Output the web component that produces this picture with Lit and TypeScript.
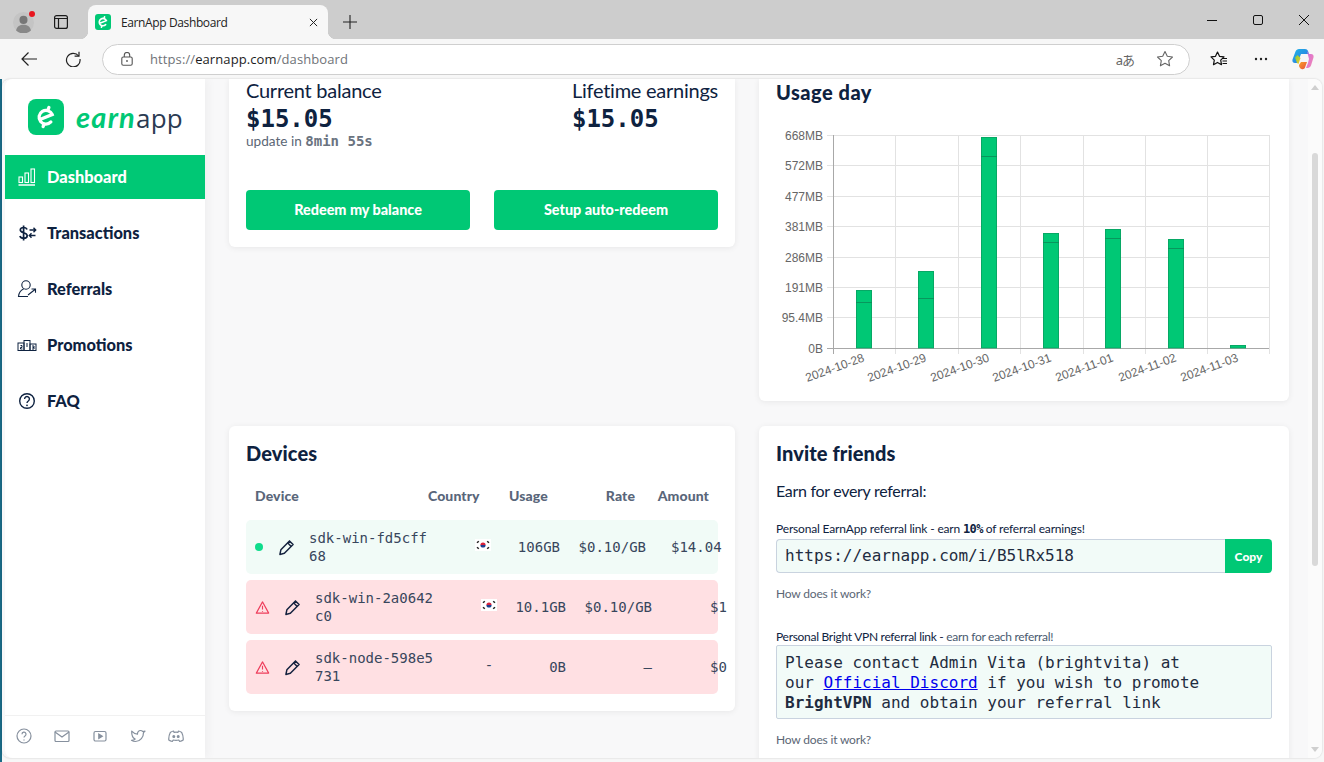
import { LitElement, html, css, svg } from "lit";
import { customElement } from "lit/decorators.js";

const pencil = html`<svg class="pencil" viewBox="0 0 16 16" width="17" height="17" fill="none" stroke="#16233f" stroke-width="1.4" stroke-linejoin="round"><path d="M10.8 1.800l3.400 3.400-8.200 8.300-4.200 1 .9-4.300z"/><path d="M9 3.600l3.400 3.400"/></svg>`;
const warn = html`<svg viewBox="0 0 16 16" width="15" height="15" fill="none" stroke="#ee3e5c" stroke-width="1.2" stroke-linejoin="round"><path d="M8 2L14.6 14H1.4z"/><path d="M8 6.200v4M8 11.600v1"/></svg>`;
const flag = html`<svg viewBox="0 0 16 12" width="16" height="12"><rect width="16" height="12" fill="#fff"/><path d="M5.400 6a2.600 2.600 0 0 1 5.200 0z" fill="#d8203a"/><path d="M5.400 6a2.600 2.600 0 0 0 5.200 0z" fill="#1d3f8f"/><g stroke="#222" stroke-width="1.500"><path d="M2 3.800l1.800-1.600M12.200 2.200L14 3.800M2 8.200l1.800 1.600M12.200 9.800L14 8.200"/></g></svg>`;
const eMark = (size: number, sw: number) => html`<svg viewBox="0 0 24 24" width=${size} height=${size} fill="none" stroke="#fff" stroke-width=${sw} stroke-linecap="round"><path d="M6.400 14.300L17.700 9.700A6.300 6.300 0 1 0 16.500 16.500"/><path d="M14.700 3.200L13.900 5.200M9.300 20.800L10.100 18.800"/></svg>`;

const yTicks: [string, number][] = [["668MB",135],["572MB",165],["477MB",196],["381MB",226],["286MB",257],["191MB",287],["95.4MB",317],["0B",348]];
const xGrid = [833,895,958,1020,1083,1145,1207,1269];
const bars: [string, number, number, number | null][] = [
  ["2024-10-28",864,290,302],["2024-10-29",926,271,298],["2024-10-30",989,137,156],
  ["2024-10-31",1051,233,242],["2024-11-01",1113,229,238],["2024-11-02",1176,239,248],["2024-11-03",1238,345,null]];

function chart() {
  const ox = 776, oy = 120;
  return html`<svg class="chart" width="510" height="270" viewBox="${ox} ${oy} 510 270">
    ${yTicks.map(([l,y]) => svg`<line x1="827" x2="1269" y1=${y+.5} y2=${y+.5} stroke="#e2e2e2"/>
      <text x="823" y=${y+4.5} text-anchor="end" class="tick">${l}</text>`)}
    ${xGrid.map((x) => svg`<line x1=${x+.5} x2=${x+.5} y1="135" y2="354" stroke="#e2e2e2"/>`)}
    <line x1="833.5" x2="833.5" y1="135" y2="354" stroke="#a8a8a8"/>
    <line x1="827" x2="1269" y1="348.5" y2="348.5" stroke="#a8a8a8"/>
    ${bars.map(([d,x,t,m]) => svg`<rect x=${x-8} y=${t} width="16" height=${348-t} fill="#00c875"/>
      <rect x=${x-7.5} y=${t+.5} width="15" height=${347.5-t} fill="none" stroke="#0a9d60" stroke-opacity=".75"/>
      ${m ? svg`<line x1=${x-8} x2=${x+8} y1=${m+.5} y2=${m+.5} stroke="#0a8a58" stroke-opacity=".8"/>` : null}
      <text class="tick" text-anchor="end" transform="translate(${x+1} 361) rotate(-20)">${d}</text>`)}
  </svg>`;
}

@customElement("app-root")
export class AppRoot extends LitElement {
  static styles = css`
    :host { display:block; width:1324px; height:762px; overflow:hidden; position:relative;
      font-family:Lato,"Open Sans",sans-serif; color:#0e2240; background:#f7f7f7; }
    * { box-sizing:border-box; }
    .mono { font-family:"DejaVu Sans Mono","Liberation Mono",monospace; }

    .tabstrip { height:39px; background:#cdcdcd; display:flex; align-items:flex-end; }
    .avatar { width:21px; height:21px; margin:0 0 6px 13px; position:relative; }
    .avatar svg { display:block; }
    .dot { position:absolute; left:16px; top:-1px; width:6px; height:6px; border-radius:50%; background:#e8161f; }
    .tabs-ic { margin:0 0 10px 20px; }
    .tab { width:240px; height:34px; margin-left:20px; background:#f7f7f7; border-radius:8px 8px 0 0; position:relative;
      display:flex; align-items:center; padding:0 10px 0 7px; font-size:12px; letter-spacing:-.38px; font-family:"Open Sans",sans-serif; color:#222; }
    .tab::before, .tab::after { content:""; position:absolute; bottom:0; width:8px; height:8px; }
    .tab::before { left:-8px; background:radial-gradient(circle at 0 0, transparent 8px, #f7f7f7 8.5px); }
    .tab::after { right:-8px; background:radial-gradient(circle at 100% 0, transparent 8px, #f7f7f7 8.5px); }
    .fav { width:16px; height:16px; border-radius:3px; background:#00c875; margin-right:10px; display:flex; align-items:center; justify-content:center; }
    .tab span { flex:1; }
    .plus { margin:0 0 10px 15px; }
    .win { margin-left:auto; display:flex; align-items:center; height:39px; }
    .win svg { display:block; margin-right:36px; }
    .win svg:last-child { margin-right:15px; }

    .toolbar { height:40px; display:flex; align-items:center; background:#f7f7f7; }
    .back { margin-left:21px; }
    .reload { margin-left:28px; }
    .url { margin-left:21px; width:1088px; height:31px; border:1px solid #cfcfcf; border-radius:16px; background:#fff;
      display:flex; align-items:center; padding:0 15px 0 18px; font:13px "Open Sans",sans-serif; color:#6f7378; }
    .url b { font-weight:400; color:#1c1c1c; }
    .url .addr { margin-left:17px; letter-spacing:.1px; flex:1; }
    .aa { font:13px "Noto Sans","Noto Sans CJK JP",sans-serif; color:#666; margin-right:22px; letter-spacing:-1px; }
    .fav-star { margin-left:20px; }
    .more { margin-left:26px; }
    .copilot { margin-left:24px; }

    .page { margin-left:2px; margin-right:2px; height:679px; background:#f8f8f9; border-radius:8px;
      display:flex; overflow:hidden; position:relative; box-shadow:0 0 2px rgba(0,0,0,.2); }
    .strip { position:absolute; left:0; top:79px; width:2px; height:683px; background:#1a6a86; }

    .side { width:200px; flex:none; margin-left:3px; background:#fff; display:flex; flex-direction:column; border-radius:8px 0 0 8px;
      box-shadow:4px 0 8px rgba(0,0,0,.035); }
    .logo { display:flex; align-items:center; height:76px; padding:0 0 0 23px; }
    .logo-mark { width:36px; height:36px; border-radius:8px; background:#00c875; display:flex; align-items:center; justify-content:center; }
    .logo-text { margin-left:12px; font-size:26px; line-height:36px; letter-spacing:.2px; color:#2b3b52; font-family:"Open Sans",sans-serif; }
    .logo-text i { color:#00c875; font-weight:700; font-family:Lato,sans-serif; font-size:29px; letter-spacing:1.2px; }
    nav { display:flex; flex-direction:column; gap:12px; }
    .item { height:44px; display:flex; align-items:center; padding-left:12px; font-weight:900; font-size:16.4px; color:#0e2240; }
    .item span { padding-bottom:1px; }
    .item svg { width:20px; height:20px; margin-right:10px; flex:none; }
    .item.on { background:#00c875; color:#fff; }
    .foot { margin-top:auto; height:43px; border-top:1px solid #f1f1f1; display:flex; align-items:center; padding:0 0 3px 11px; gap:22px; }
    .foot svg { width:16px; height:16px; flex:none; opacity:.9; }

    main { flex:1; display:grid; grid-template-columns:506px 530px; grid-template-rows:322px 1fr; gap:25px 24px; padding-left:24px; align-content:start; min-width:0; }
    .card { background:#fff; border-radius:0 0 6px 6px; box-shadow:0 1px 6px rgba(0,0,0,.07); }
    .balance { align-self:start; height:168px; padding:0 17px; display:flex; flex-direction:column; }
    .bal-row { display:flex; justify-content:space-between; margin-top:-1px; }
    .bal-h { font-size:20px; line-height:24px; letter-spacing:-.25px; }
    .amount { font-size:24px; font-weight:700; line-height:28px; margin-top:3px; }
    .upd { font-size:13.6px; line-height:16px; color:#5b6675; }
    .upd b { color:#6a7380; font-size:14px; }
    .btns { display:flex; gap:24px; margin-top:auto; margin-bottom:17px; }
    .btn { flex:1; height:40px; padding-bottom:2px; border-radius:4px; background:#00c875; color:#fff; font-weight:900; font-size:14.4px; display:flex; align-items:center; justify-content:center; }

    .usage { padding:0 17px; position:relative; }
    h2 { margin:0; font-size:20px; font-weight:900; line-height:26px; color:#0e2240; letter-spacing:.1px; }
    .usage h2 { letter-spacing:.5px; }
    .chart { display:block; margin:15px 0 0 0; overflow:visible; }
    .tick { font:12px "Liberation Sans",sans-serif; fill:#666; }

    .card.full { border-radius:6px; }
    .devices { height:285px; padding:14px 17px; }
    .thead { display:grid; grid-template-columns:173px 81px 40px 86px 74px; height:20px; margin-top:20px; font-size:14px; letter-spacing:.1px; font-weight:900; color:#59667a; line-height:20px; padding-left:9px; white-space:nowrap; }
    .rows { margin-top:14px; display:flex; flex-direction:column; gap:6px; }
    .row { height:54px; width:472px; border-radius:5px; display:grid; grid-template-columns:var(--s) 151px 46px 54px 86px 1fr; align-items:center; font-size:14px; line-height:18px; color:#38465c; white-space:nowrap; }
    .row.ok { --s:63px; background:#f1fbf7; }
    .row.bad { --s:69px; background:#ffe0e3; }
    .st { display:flex; align-items:center; padding-left:9px; }
    .row.ok .st span { width:8px; height:8px; border-radius:50%; background:#0fdc8c; margin-right:15px; }
    .row.bad .st svg:first-child { margin-right:14px; }
    .name { width:14ch; white-space:normal; word-break:break-all; }
    .fl { display:flex; justify-content:center; margin-top:-4px; }
    .r { text-align:right; }
    .amt { padding-left:25px; }
    .row.bad .amt { padding-left:58px; }

    .invite { padding:14px 17px; height:360px; border-radius:6px 6px 0 0; }
    .earn { font-size:16px; line-height:20px; margin-top:15px; letter-spacing:-.3px; }
    .lbl { font-size:12px; line-height:16px; letter-spacing:-.17px; margin-top:20px; }
    .lbl b { font-family:"DejaVu Sans Mono",monospace; font-weight:700; font-size:12px; letter-spacing:-.6px; }
    .lbl span { color:#4a5a70; }
    .lbl.second { letter-spacing:-.29px; margin-top:27px; }
    .link { display:flex; margin-top:2px; height:34px; }
    .link div { flex:1; border:1px solid #c9d3df; border-right:0; border-radius:4px 0 0 4px; background:#f2fbf8; font-size:16px; line-height:32px; padding-left:8px; color:#1f2c40; }
    .copy { width:47px; background:#00c875; color:#fff; font-weight:900; font-size:12px; display:flex; align-items:center; justify-content:center; border-radius:0 4px 4px 0; }
    .how { font-size:12px; line-height:16px; color:#5b6675; margin-top:13px; letter-spacing:-.18px; }
    .box { height:74px; border:1px solid #c9d3df; background:#f2fbf8; padding:7px 8px; font-size:16px; line-height:20px; color:#1f2c40; border-radius:2px; }
    .box a { color:#0000ee; text-decoration:underline; }
    .box b { font-weight:700; }

    .scroll { width:14px; margin-left:auto; position:relative; background:#fbfbfb; flex:none; }
    .thumb { position:absolute; left:4px; top:74px; width:6px; height:413px; border-radius:3px; background:#d9d9d9; }
    .scroll svg { position:absolute; left:3px; }
    .up { top:6px; }
    .down { bottom:6px; }
  `;

  render() {
    return html`
      <div class="tabstrip">
        <div class="avatar">
          <svg viewBox="0 0 24 24" width="21" height="21"><circle cx="12" cy="12" r="12" fill="#c4c4c4"/><circle cx="12" cy="9" r="4.600" fill="#777"/><path d="M3.500 21c1-5 4.500-6.500 8.500-6.500s7.500 1.500 8.500 6.500a12 12 0 0 1-17 0z" fill="#888"/></svg>
          <span class="dot"></span>
        </div>
        <svg class="tabs-ic" viewBox="0 0 14 14" width="14" height="14" fill="none" stroke="#1a1a1a" stroke-width="1.200"><rect x=".6" y=".6" width="12.800" height="12.800" rx="2"/><path d="M.6 3.500H13.400M4.500 3.500V13.400"/></svg>
        <div class="tab">
          <div class="fav">${eMark(14, 2.8)}</div>
          <span>EarnApp Dashboard</span>
          <svg viewBox="0 0 10 10" width="9" height="9" stroke="#222" stroke-width="1.100"><path d="M1 1l8 8M9 1l-8 8"/></svg>
        </div>
        <svg class="plus" viewBox="0 0 14 14" width="14" height="14" stroke="#222" stroke-width="1.100"><path d="M7 0v14M0 7h14"/></svg>
        <div class="win">
          <svg viewBox="0 0 10 10" width="10" height="10" stroke="#111" stroke-width="1"><path d="M0 5.500h10"/></svg>
          <svg viewBox="0 0 10 10" width="10" height="10" fill="none" stroke="#111" stroke-width="1"><rect x=".5" y=".5" width="9" height="9" rx="1.500"/></svg>
          <svg viewBox="0 0 10 10" width="10" height="10" stroke="#111" stroke-width="1"><path d="M0 0l10 10M10 0L0 10"/></svg>
        </div>
      </div>
      <div class="toolbar">
        <svg class="back" viewBox="0 0 16 16" width="16" height="16" fill="none" stroke="#222" stroke-width="1.200"><path d="M16 8H1M7.500 1.500L1 8l6.500 6.500"/></svg>
        <svg class="reload" viewBox="0 0 16 16" width="16" height="16" fill="none" stroke="#222" stroke-width="1.200"><path d="M13.700 5A6.800 6.800 0 1 0 15 8"/><path d="M14 .8V5.200H9.600"/></svg>
        <div class="url">
          <svg viewBox="0 0 12 14" width="12" height="14" fill="none" stroke="#555" stroke-width="1.100"><rect x=".8" y="5" width="10.400" height="8.300" rx="1.500"/><path d="M3.300 5V3.200a2.700 2.700 0 0 1 5.400 0V5"/><circle cx="6" cy="9" r=".9" fill="#555" stroke="none"/></svg>
          <span class="addr">https://<b>earnapp.com</b>/dashboard</span>
          <span class="aa">aあ</span>
          <svg viewBox="0 0 18 18" width="18" height="18" fill="none" stroke="#666" stroke-width="1.100" stroke-linejoin="round"><path d="M9 1.500l2.300 4.800 5.200.7-3.800 3.600.9 5.200L9 13.300l-4.600 2.500.9-5.200L1.500 7l5.200-.7z"/></svg>
        </div>
        <svg class="fav-star" viewBox="0 0 18 18" width="18" height="18" fill="none" stroke="#111" stroke-width="1.200" stroke-linejoin="round"><path d="M7.500 2l2 4.300 4.500.6-3.300 3.200.8 4.600-4-2.300-4 2.300.8-4.600L1 6.900l4.500-.6z"/><path d="M12 8.500h5M12.500 11h4.500M12.500 13.500h4.500"/></svg>
        <svg class="more" viewBox="0 0 14 4" width="14" height="4" fill="#222"><circle cx="2" cy="2" r="1.200"/><circle cx="7" cy="2" r="1.200"/><circle cx="12" cy="2" r="1.200"/></svg>
        <svg class="copilot" viewBox="0 0 22 22" width="22" height="22">
          <defs>
            <linearGradient id="c1" x1="0" y1="0" x2="1" y2="1"><stop offset="0" stop-color="#1fb6e8"/><stop offset="1" stop-color="#2f6fe0"/></linearGradient>
            <linearGradient id="c2" x1="0" y1="0" x2="1" y2="1"><stop offset="0" stop-color="#d66ae0"/><stop offset="1" stop-color="#f08ab0"/></linearGradient>
            <linearGradient id="c3" x1="0" y1="0" x2="1" y2="1"><stop offset="0" stop-color="#7fd13b"/><stop offset="1" stop-color="#f7c52c"/></linearGradient>
            <linearGradient id="c4" x1="0" y1="0" x2="1" y2="1"><stop offset="0" stop-color="#f9a02a"/><stop offset="1" stop-color="#e8503a"/></linearGradient>
          </defs>
          <path d="M7 1h6c1.500 0 2.500.8 3 2l1 3H9L7.500 10 5 15H3c-2 0-3-1.500-2.500-3.500l3-8C4 2 5.500 1 7 1z" fill="url(#c1)"/>
          <path d="M3 9.500L5 15l1.500 1 2-6-3-3z" fill="url(#c3)"/>
          <path d="M15 3l2 3h2c2 0 3 1.500 2.500 3.500l-2.500 8c-.5 1.500-2 2.500-3.500 2.500H14l2-5 1-4z" fill="url(#c2)"/>
          <path d="M9 14h6l-2 5.500C12.500 21 11 21.500 9.500 21 8 20.500 7 19 7 17z" fill="url(#c4)"/>
        </svg>
      </div>
      <div class="strip"></div>
      <div class="page">
        <aside class="side">
          <div class="logo">
            <div class="logo-mark">${eMark(26, 3)}</div>
            <div class="logo-text"><i>earn</i>app</div>
          </div>
          <nav>
            <div class="item on"><svg viewBox="0 0 20 20" fill="none" stroke="#fff" stroke-width="1.100"><rect x="2" y="10" width="3.500" height="5.500"/><rect x="8" y="6" width="3.500" height="9.500"/><rect x="14" y="2" width="3.500" height="13.500"/><path d="M1.500 18h16.500" stroke-width="1.400"/></svg><span>Dashboard</span></div>
            <div class="item"><svg viewBox="0 0 20 20" fill="none" stroke="#0e2240" stroke-width="1.700"><path d="M10 6.500C9.500 5 7.900 4.500 6.500 4.500 4.800 4.500 3.300 5.400 3.300 7c0 3.500 6.900 2 6.900 5.800 0 1.600-1.500 2.500-3.500 2.500-1.800 0-3.300-.8-3.800-2.300M6.600 2.500v15"/><path d="M12.500 7h6M16.500 4.800L18.700 7l-2.200 2.200M18.500 12.500h-6M14.500 10.300L12.300 12.500l2.200 2.200" stroke-width="1.400"/></svg><span>Transactions</span></div>
            <div class="item"><svg viewBox="0 0 20 20" fill="none" stroke="#0e2240" stroke-width="1.100"><circle cx="9" cy="6" r="4.200"/><path d="M6.600 10C4 11 2 13 1.500 17.500h9.500"/><path d="M11 16l7-5.500M14.500 10h4v3.800"/></svg><span>Referrals</span></div>
            <div class="item"><svg viewBox="0 0 20 20" fill="none" stroke="#0e2240" stroke-width="1"><rect x="1" y="8" width="6" height="7.500"/><rect x="7" y="5.500" width="6" height="10"/><rect x="13" y="9" width="6" height="6.500"/><path d="M10 8v4M3.500 10.500h1.500v2h-1.500v1.500h2M15 11h2v1.500h-1.500M17 12.500v1.500h-2"/></svg><span>Promotions</span></div>
            <div class="item"><svg viewBox="0 0 20 20" fill="none" stroke="#0e2240" stroke-width="1.400"><circle cx="10" cy="10" r="7.300"/><path d="M7.600 8a2.400 2.400 0 1 1 3.700 2c-.9.600-1.300 1-1.300 2"/><circle cx="10" cy="14.300" r=".9" fill="#0e2240" stroke="none"/></svg><span>FAQ</span></div>
          </nav>
          <div class="foot">
            <svg viewBox="0 0 16 16" fill="none" stroke="#7a8594" stroke-width="1.200"><circle cx="8" cy="8" r="7"/><path d="M6 6.200a2 2 0 1 1 3 1.700c-.7.500-1 .8-1 1.600M8 11.500v1"/></svg>
            <svg viewBox="0 0 16 16" fill="none" stroke="#7a8594" stroke-width="1.200"><rect x="1" y="3" width="14" height="10.500" rx="1"/><path d="M1 4l7 5 7-5"/></svg>
            <svg viewBox="0 0 16 16" fill="none" stroke="#7a8594" stroke-width="1.200"><rect x="2" y="3.500" width="12" height="9.500" rx="1.500"/><path d="M6.800 6v4.500L10.300 8.200z" fill="#7a8594"/></svg>
            <svg viewBox="0 0 16 16" fill="none" stroke="#7a8594" stroke-width="1.200" stroke-linejoin="round"><path d="M15 3.200c-.5.700-1 1-1.500 1.300.1 4.500-3.100 9-8 9-1.500 0-3-.5-4-1.200 1.500 0 2.700-.4 3.700-1.200-2.500-1-3.700-3-3.500-8C3 4.500 5 6 7.500 6.200 7.200 4 8.700 2.500 10.500 2.500c1 0 1.700.4 2.300 1z"/></svg>
            <svg viewBox="0 0 16 16" fill="none" stroke="#7a8594" stroke-width="1.200" stroke-linejoin="round"><path d="M5.500 3C4 3.300 3 3.800 2.300 4.500 1 7 .6 9.500.8 12c1 .8 2.300 1.300 3.500 1.500l.9-1.500c1.800.5 3.800.5 5.600 0l.9 1.500c1.200-.2 2.500-.7 3.500-1.500.2-2.500-.2-5-1.500-7.500-.7-.7-1.700-1.200-3.200-1.500L10 4.300c-1.300-.2-2.700-.2-4 0z"/><circle cx="5.800" cy="8.600" r=".9" fill="#7a8594"/><circle cx="10.200" cy="8.600" r=".9" fill="#7a8594"/></svg>
          </div>
        </aside>
        <main>
          <section class="card balance">
            <div class="bal-row">
              <div>
                <div class="bal-h">Current balance</div>
                <div class="amount mono">$15.05</div>
                <div class="upd">update in <b class="mono">8min 55s</b></div>
              </div>
              <div>
                <div class="bal-h">Lifetime earnings</div>
                <div class="amount mono">$15.05</div>
              </div>
            </div>
            <div class="btns"><div class="btn">Redeem my balance</div><div class="btn">Setup auto-redeem</div></div>
          </section>
          <section class="card usage">
            <h2>Usage day</h2>
            ${chart()}
          </section>
          <section class="card full devices">
            <h2>Devices</h2>
            <div class="thead"><div>Device</div><div>Country</div><div>Usage</div><div class="r">Rate</div><div class="r">Amount</div></div>
            <div class="rows mono">
              <div class="row ok">
                <div class="st"><span></span>${pencil}</div><div class="name">sdk-win-fd5cff68</div><div class="fl">${flag}</div><div class="r">106GB</div><div class="r">$0.10/GB</div><div class="amt">$14.04</div>
              </div>
              <div class="row bad">
                <div class="st">${warn}${pencil}</div><div class="name">sdk-win-2a0642c0</div><div class="fl">${flag}</div><div class="r">10.1GB</div><div class="r">$0.10/GB</div><div class="amt">$1</div>
              </div>
              <div class="row bad">
                <div class="st">${warn}${pencil}</div><div class="name">sdk-node-598e5731</div><div class="fl">-</div><div class="r">0B</div><div class="r">—</div><div class="amt">$0</div>
              </div>
            </div>
          </section>
          <section class="card invite">
            <h2>Invite friends</h2>
            <div class="earn">Earn for every referral:</div>
            <div class="lbl">Personal EarnApp referral link - earn <b>10%</b> of referral earnings!</div>
            <div class="link"><div class="mono">https://earnapp.com/i/B5lRx518</div><span class="copy">Copy</span></div>
            <div class="how">How does it work?</div>
            <div class="lbl second">Personal Bright VPN referral link - <span>earn for each referral!</span></div>
            <div class="box mono">Please contact Admin Vita (brightvita) at<br>our <a>Official Discord</a> if you wish to promote<br><b>BrightVPN</b> and obtain your referral link</div>
            <div class="how">How does it work?</div>
          </section>
        </main>
        <div class="scroll">
          <svg class="up" viewBox="0 0 8 5" width="8" height="5" fill="#cfcfcf"><path d="M4 0l4 5H0z"/></svg>
          <div class="thumb"></div>
          <svg class="down" viewBox="0 0 8 5" width="8" height="5" fill="#cfcfcf"><path d="M4 5l4-5H0z"/></svg>
        </div>
      </div>
    `;
  }
}
